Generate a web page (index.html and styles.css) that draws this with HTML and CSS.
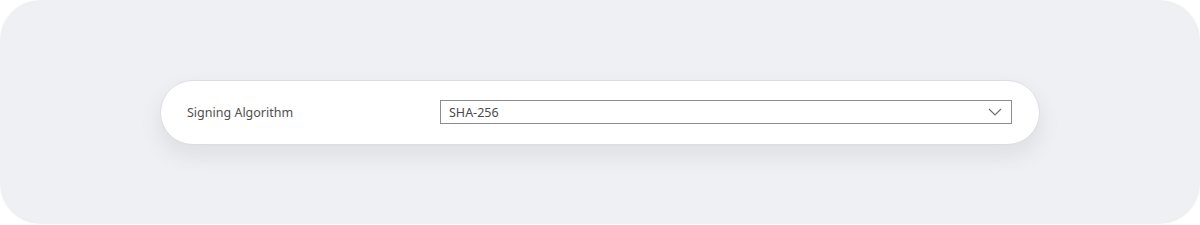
FILE: index.html
```html
<!DOCTYPE html>
<html>
<head>
  <meta charset="UTF-8">
  <title>Signing Algorithm</title>
  <link rel="stylesheet" href="styles.css">
</head>
<body>
  <div class="panel">
    <div class="field">
      <label class="field_label">Signing Algorithm</label>
      <div class="select">
        <span class="select_value">SHA-256</span>
        <svg class="chevron" width="14" height="8" viewBox="0 0 14 8">
          <path d="M1 1 L7 7 L13 1" fill="none" stroke="#6b6b6b" stroke-width="1.1"/>
        </svg>
      </div>
    </div>
  </div>
</body>
</html>
```
FILE: styles.css
```css
*{
  margin:0;
  padding:0;
  box-sizing:border-box;
}
body{
  background:#ffffff;
  font-family:"Noto Sans","Open Sans",sans-serif;
  width:1200px;
  height:225px;
}
.panel{
  width:1200px;
  height:224px;
  background:#eff0f3;
  border-radius:40px;
  display:flex;
  align-items:center;
  justify-content:center;
}
.field{
  width:880px;
  height:65px;
  background:#ffffff;
  border:1px solid #dcdde0;
  border-radius:33px;
  box-shadow:0 10px 22px rgba(60,70,90,0.10);
  display:grid;
  grid-template-columns:253px 1fr;
  align-items:center;
  padding:0 27px 0 26px;
}
.field_label{
  font-size:12.5px;
  color:#505050;
}
.select{
  height:24px;
  border:1px solid #8c8c8c;
  display:flex;
  align-items:center;
  justify-content:space-between;
  padding:0 9px 0 8px;
}
.select_value{
  font-size:12.5px;
  color:#4a4a4a;
}
.chevron{
  display:block;
}
```
